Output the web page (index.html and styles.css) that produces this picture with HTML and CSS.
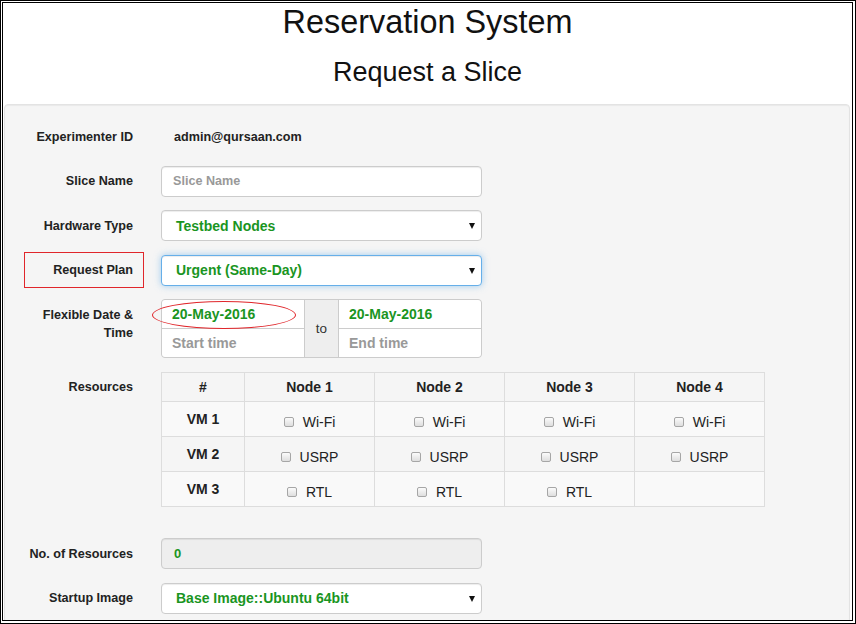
FILE: index.html
```html
<!DOCTYPE html>
<html>
<head>
<meta charset="utf-8">
<title>Reservation System</title>
<link rel="stylesheet" href="styles.css">
</head>
<body>
<div class="frame">
  <div class="inner">
    <h1 class="title">Reservation System</h1>
    <h2 class="subtitle">Request a Slice</h2>
    <div class="well">
      <form class="form">
        <div class="row">
          <label class="label">Experimenter ID</label>
          <div class="static">admin@qursaan.com</div>
        </div>
        <div class="row">
          <label class="label">Slice Name</label>
          <input class="control" type="text" placeholder="Slice Name">
        </div>
        <div class="row">
          <label class="label">Hardware Type</label>
          <div class="control select"><span class="value">Testbed Nodes</span><span class="caret"></span></div>
        </div>
        <div class="row">
          <label class="label annotated">Request Plan<span class="red-box"></span></label>
          <div class="control select focus"><span class="value">Urgent (Same-Day)</span><span class="caret"></span></div>
        </div>
        <div class="row">
          <label class="label">Flexible Date &amp;<br>Time</label>
          <div class="date-group">
            <div class="dcell d1 value">20-May-2016</div>
            <div class="dcell d2 placeholder">Start time</div>
            <div class="dcell addon">to</div>
            <div class="dcell d3 value">20-May-2016</div>
            <div class="dcell d4 placeholder">End time</div>
            <span class="red-ellipse"></span>
          </div>
        </div>
        <div class="row row-table">
          <label class="label">Resources</label>
          <table class="res">
            <colgroup><col class="c0"><col class="cn"><col class="cn"><col class="cn"><col class="cn"></colgroup>
            <thead>
              <tr><th>#</th><th>Node 1</th><th>Node 2</th><th>Node 3</th><th>Node 4</th></tr>
            </thead>
            <tbody>
              <tr class="odd"><th>VM 1</th>
                <td><label class="check"><input type="checkbox"><span>Wi-Fi</span></label></td>
                <td><label class="check"><input type="checkbox"><span>Wi-Fi</span></label></td>
                <td><label class="check"><input type="checkbox"><span>Wi-Fi</span></label></td>
                <td><label class="check"><input type="checkbox"><span>Wi-Fi</span></label></td>
              </tr>
              <tr><th>VM 2</th>
                <td><label class="check"><input type="checkbox"><span>USRP</span></label></td>
                <td><label class="check"><input type="checkbox"><span>USRP</span></label></td>
                <td><label class="check"><input type="checkbox"><span>USRP</span></label></td>
                <td><label class="check"><input type="checkbox"><span>USRP</span></label></td>
              </tr>
              <tr class="odd"><th>VM 3</th>
                <td><label class="check"><input type="checkbox"><span>RTL</span></label></td>
                <td><label class="check"><input type="checkbox"><span>RTL</span></label></td>
                <td><label class="check"><input type="checkbox"><span>RTL</span></label></td>
                <td></td>
              </tr>
            </tbody>
          </table>
        </div>
        <div class="row">
          <label class="label">No. of Resources</label>
          <div class="control readonly"><span class="value small">0</span></div>
        </div>
        <div class="row">
          <label class="label">Startup Image</label>
          <div class="control select"><span class="value">Base Image::Ubuntu 64bit</span><span class="caret"></span></div>
        </div>
      </form>
    </div>
  </div>
</div>
</body>
</html>
```
FILE: styles.css
```css
html, body {
  margin: 0;
  padding: 0;
  background: #fff;
}
body {
  font-family: "Liberation Sans", Arial, Helvetica, sans-serif;
  color: #333;
  font-size: 12.6px;
  line-height: 18px;
}
.frame {
  width: 856px;
  height: 624px;
  box-sizing: border-box;
  border: 1px solid #000;
  overflow: hidden;
  background: #fff;
}
.inner {
  margin: 1px 0 0 1px;
  width: 851px;
  height: 619px;
  box-sizing: border-box;
  border: 1px solid #000;
  overflow: hidden;
}
.title {
  margin: 2px 0 0 0;
  font-size: 32.4px;
  line-height: 35.6px;
  font-weight: normal;
  text-align: center;
  color: #111;
}
.subtitle {
  margin: 17.5px 0 0 0;
  font-size: 27px;
  line-height: 29.7px;
  font-weight: normal;
  text-align: center;
  color: #111;
}
.well {
  margin: 16.4px 0 0 1px;
  width: 846px;
  height: 600px;
  box-sizing: border-box;
  background: #f5f5f5;
  border: 1px solid #e3e3e3;
  border-radius: 4px;
  box-shadow: inset 0 1px 1px rgba(0,0,0,.05);
  padding-top: 16.2px;
}
.form {
  margin: 0;
}
.row {
  display: flex;
  align-items: flex-start;
  gap: 14px;
  margin-bottom: 13.5px;
  min-height: 31px;
}
.row-table {
  margin-bottom: 31.5px;
}
.label {
  position: relative;
  width: 142px;
  flex: none;
  box-sizing: border-box;
  padding: 6.3px 14px 0 0;
  text-align: right;
  font-weight: bold;
  color: #222;
}
.static {
  padding: 6.3px 0 0 13px;
  font-weight: bold;
  color: #222;
}
.control {
  width: 321px;
  height: 31px;
  box-sizing: border-box;
  margin: 0;
  padding: 0 11px;
  border: 1px solid #ccc;
  border-radius: 4px;
  background: #fff;
  box-shadow: inset 0 1px 1px rgba(0,0,0,.075);
  font-family: inherit;
  font-size: 12.6px;
  font-weight: bold;
  color: #1a951f;
  display: flex;
  align-items: center;
}
.control::placeholder {
  color: #999;
  font-weight: bold;
}
.select {
  padding: 0 6px 0 14px;
  justify-content: space-between;
}
.value {
  font-size: 14px;
  font-weight: bold;
  color: #1a951f;
}
.value.small {
  font-size: 13px;
  padding-left: 1px;
}
.caret {
  width: 0;
  height: 0;
  border-left: 3.5px solid transparent;
  border-right: 3.5px solid transparent;
  border-top: 6px solid #111;
  margin-top: 1px;
}
.focus {
  border-color: #66afe9;
  box-shadow: inset 0 1px 1px rgba(0,0,0,.075), 0 0 7px rgba(102,175,233,.6);
}
.readonly {
  background: #eee;
}
.red-box {
  position: absolute;
  left: 19px;
  top: -3px;
  width: 120px;
  height: 36px;
  box-sizing: border-box;
  border: 1px solid #e0262b;
}
.date-group {
  position: relative;
  display: grid;
  grid-template-columns: 142px 33px 142px;
  grid-template-rows: 28px 28px;
  column-gap: 1px;
  row-gap: 1px;
  width: 321px;
  box-sizing: border-box;
  border: 1px solid #ccc;
  border-radius: 4px;
  background: #ccc;
  overflow: visible;
}
.dcell {
  background: #fff;
  display: flex;
  align-items: center;
  padding-left: 10px;
  font-size: 14px;
  font-weight: bold;
}
.d1 { grid-column: 1; grid-row: 1; border-top-left-radius: 3px; }
.d2 { grid-column: 1; grid-row: 2; border-bottom-left-radius: 3px; }
.d3 { grid-column: 3; grid-row: 1; border-top-right-radius: 3px; }
.d4 { grid-column: 3; grid-row: 2; border-bottom-right-radius: 3px; }
.placeholder {
  color: #999;
}
.addon {
  grid-column: 2;
  grid-row: 1 / span 2;
  background: #eee;
  justify-content: center;
  padding: 0;
  font-weight: normal;
  font-size: 13.5px;
  color: #333;
}
.red-ellipse {
  position: absolute;
  left: -10px;
  top: 1px;
  width: 144px;
  height: 28px;
  box-sizing: border-box;
  border: 1px solid #e0262b;
  border-radius: 50%;
}
.res {
  border-collapse: collapse;
  table-layout: fixed;
  width: 603px;
  font-size: 14px;
  color: #222;
}
.c0 { width: 83px; }
.cn { width: 130px; }
.res th, .res td {
  border: 1px solid #ddd;
  text-align: center;
  vertical-align: middle;
  padding: 0;
}
.res thead tr { height: 29px; }
.res tbody tr { height: 35px; }
.res thead th { padding-top: 1px; }
.res tr.odd { background: #f9f9f9; }
.check {
  display: inline-flex;
  align-items: center;
  gap: 9px;
  padding-top: 6px;
  font-weight: normal;
  color: #222;
}
.check input {
  -webkit-appearance: none;
  appearance: none;
  width: 10px;
  height: 10px;
  margin: 0;
  box-sizing: border-box;
  border: 1px solid #a6a6a6;
  border-radius: 2px;
  background: linear-gradient(#fbfbfb, #dedede);
}
```
